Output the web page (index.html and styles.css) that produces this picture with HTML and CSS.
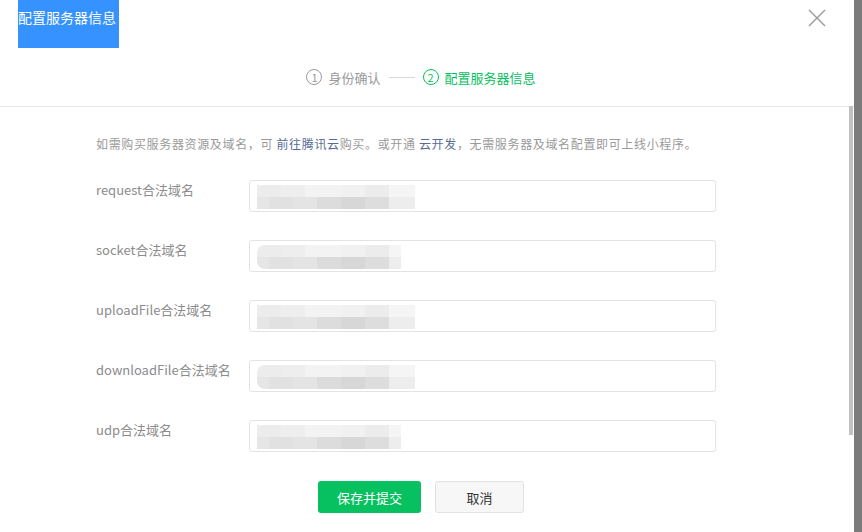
FILE: index.html
```html
<!DOCTYPE html>
<html lang="zh-CN">
<head>
    <meta charset="UTF-8">
    <meta name="viewport" content="width=device-width, initial-scale=1.0">
    <title>配置服务器信息</title>
    <link rel="stylesheet" href="styles.css">
</head>
<body>
    <div class="page">
        <div class="dialog">
            <div class="dialog-header">
                <div class="dialog-title">配置服务器信息</div>
                <div class="steps">
                    <div class="step">
                        <span class="step-num">1</span>
                        <span>身份确认</span>
                    </div>
                    <span class="step-line"></span>
                    <div class="step step-active">
                        <span class="step-num">2</span>
                        <span>配置服务器信息</span>
                    </div>
                </div>
                <span class="btn-close">
                    <svg width="18" height="18" viewBox="0 0 18 18">
                        <path d="M1 1L17 17M17 1L1 17" stroke="#9a9a9a" stroke-width="1.4" fill="none"/>
                    </svg>
                </span>
            </div>

            <div class="dialog-body">
                <p class="tips">如需购买服务器资源及域名，可 <a href="#">前往腾讯云</a>购买。或开通 <a href="#">云开发</a>，无需服务器及域名配置即可上线小程序。</p>

                <form class="server-form">
                    <div class="form-row">
                        <label>request合法域名</label>
                        <div class="input-box"><div class="mask mask-long"></div></div>
                    </div>
                    <div class="form-row">
                        <label>socket合法域名</label>
                        <div class="input-box"><div class="mask mask-short round"></div></div>
                    </div>
                    <div class="form-row">
                        <label>uploadFile合法域名</label>
                        <div class="input-box"><div class="mask mask-long"></div></div>
                    </div>
                    <div class="form-row">
                        <label>downloadFile合法域名</label>
                        <div class="input-box"><div class="mask mask-long round"></div></div>
                    </div>
                    <div class="form-row">
                        <label>udp合法域名</label>
                        <div class="input-box"><div class="mask mask-short"></div></div>
                    </div>

                    <div class="form-actions">
                        <button type="button" class="btn btn-primary">保存并提交</button>
                        <button type="button" class="btn btn-default">取消</button>
                    </div>
                </form>
            </div>
            <div class="scroll-thumb"></div>
        </div>
        <div class="side-strip"></div>
    </div>
</body>
</html>
```

FILE: styles.css
```css
body {
    margin: 0;
    padding: 0;
    font-family: "Noto Sans CJK SC", "Noto Sans", sans-serif;
    background-color: #7b7b7b;
}
.page {
    display: flex;
    width: 862px;
    height: 532px;
    overflow: hidden;
}
.dialog {
    position: relative;
    width: 854px;
    height: 532px;
    background-color: #fff;
}
.side-strip {
    width: 8px;
    background-color: #7b7b7b;
}
.scroll-thumb {
    position: absolute;
    right: 1px;
    top: 106px;
    width: 4px;
    height: 329px;
    background-color: #c1c1c1;
}

/* header */
.dialog-header {
    position: relative;
    padding: 0 0 19px 18px;
    border-bottom: 1px solid #e7e7e7;
}
.dialog-title {
    width: 101px;
    height: 48px;
    box-sizing: border-box;
    padding-top: 7px;
    background-color: #3592fe;
    color: #fff;
    font-size: 14px;
    line-height: 20px;
    white-space: nowrap;
}
.btn-close {
    position: absolute;
    top: 8px;
    right: 28px;
    width: 18px;
    height: 18px;
}
.steps {
    display: flex;
    align-items: center;
    justify-content: center;
    margin: 19px 0 0 -30px;
    height: 20px;
    font-size: 13px;
    color: #9a9a9a;
}
.step {
    display: flex;
    align-items: center;
    gap: 6px;
}
.step-num {
    box-sizing: border-box;
    width: 16px;
    height: 16px;
    border: 1px solid currentColor;
    border-radius: 50%;
    font-size: 11px;
    line-height: 14px;
    text-align: center;
}
.step-line {
    width: 26px;
    height: 1px;
    margin: 0 8px;
    background-color: #d9d9d9;
}
.step-active {
    color: #07c160;
}

/* body */
.dialog-body {
    padding: 27px 0 0 96px;
}
.tips {
    margin: 0;
    font-size: 12px;
    line-height: 20px;
    letter-spacing: 0.65px;
    color: #9a9a9a;
}
.tips a {
    color: #576b95;
    text-decoration: none;
}
.server-form {
    margin-top: 26px;
}
.form-row {
    display: flex;
    align-items: flex-start;
    margin-bottom: 28px;
}
.form-row label {
    width: 153px;
    font-size: 13px;
    line-height: 20px;
    color: #8c8c8c;
    white-space: nowrap;
}
.input-box {
    box-sizing: border-box;
    width: 467px;
    height: 32px;
    padding: 4px 7px;
    border: 1px solid #e3e3e3;
    border-radius: 3px;
    background-color: #fff;
}
.mask {
    height: 24px;
    background-image:
        linear-gradient(90deg, #ececec 0 24px, #eeeeee 24px 48px, #f3f3f3 48px 84px, #f1f1f1 84px 108px, #ececec 108px 132px, #f5f5f5 132px),
        linear-gradient(90deg, #e6e6e6 0 12px, #e1e1e1 12px 36px, #e4e4e4 36px 60px, #dcdcdc 60px 84px, #d7d7d7 84px 108px, #dddddd 108px 132px, #ededed 132px);
    background-size: 100% 12px, 100% 12px;
    background-position: top left, bottom left;
    background-repeat: no-repeat;
}
.mask-long {
    width: 158px;
}
.mask-short {
    width: 144px;
}
.mask.round {
    border-radius: 8px 0 0 8px;
}

.form-actions {
    display: flex;
    justify-content: center;
    gap: 14px;
    padding-right: 108px;
    margin-top: 29px;
}
.btn {
    height: 32px;
    border-radius: 3px;
    font-family: inherit;
    font-size: 13px;
    cursor: pointer;
}
.btn-primary {
    width: 103px;
    border: none;
    background-color: #07c160;
    color: #fff;
}
.btn-default {
    width: 89px;
    border: 1px solid #e2e2e2;
    background-color: #f7f7f7;
    color: #333;
}
```
